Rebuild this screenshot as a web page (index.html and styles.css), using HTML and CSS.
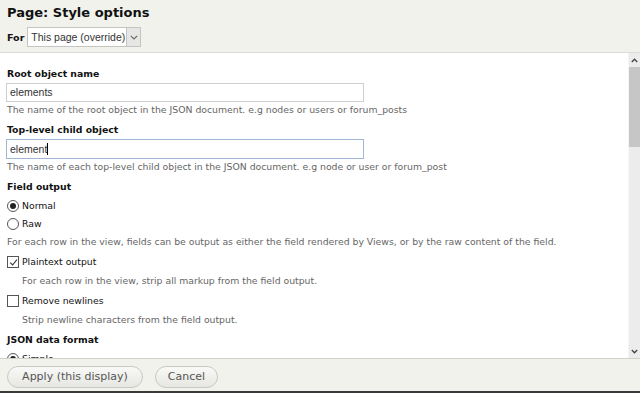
FILE: index.html
```html
<!DOCTYPE html>
<html>
<head>
<meta charset="utf-8">
<link rel="stylesheet" href="styles.css">
</head>
<body>
<div class="dialog">
  <div class="header">
    <h1 class="title">Page: Style options</h1>
    <div class="for-row">
      <span class="for-label">For</span>
      <div class="select">
        <span class="select-text">This page (override)</span>
        <span class="select-btn"><svg width="8" height="5" viewBox="0 0 8 5"><path d="M0.8 0.8 L4 4 L7.2 0.8" fill="none" stroke="#666" stroke-width="1.1"/></svg></span>
      </div>
    </div>
  </div>
  <div class="body">
    <div class="content">
      <div class="item">
        <div class="label">Root object name</div>
        <div class="input">elements</div>
        <div class="desc">The name of the root object in the JSON document. e.g nodes or users or forum_posts</div>
      </div>
      <div class="item">
        <div class="label">Top-level child object</div>
        <div class="input focused">element<span class="caret"></span></div>
        <div class="desc">The name of each top-level child object in the JSON document. e.g node or user or forum_post</div>
      </div>
      <div class="item tight">
        <div class="label">Field output</div>
        <div class="options">
          <div class="option"><span class="radio checked"></span>Normal</div>
          <div class="option"><span class="radio"></span>Raw</div>
        </div>
        <div class="desc after-options">For each row in the view, fields can be output as either the field rendered by Views, or by the raw content of the field.</div>
      </div>
      <div class="item tight">
        <div class="option"><span class="check"><svg width="9" height="9" viewBox="0 0 9 9"><path d="M1.3 4.6 L3.6 7 L7.9 1.6" fill="none" stroke="#333" stroke-width="1.1"/></svg></span>Plaintext output</div>
        <div class="desc indent">For each row in the view, strip all markup from the field output.</div>
      </div>
      <div class="item">
        <div class="option"><span class="check"></span>Remove newlines</div>
        <div class="desc indent">Strip newline characters from the field output.</div>
      </div>
      <div class="item">
        <div class="label">JSON data format</div>
        <div class="options">
          <div class="option"><span class="radio checked"></span>Simple</div>
        </div>
      </div>
    </div>
    <div class="scrollbar">
      <div class="arrow"><svg width="7" height="5" viewBox="0 0 7 5"><path d="M0.8 4 L3.5 1.2 L6.2 4" fill="none" stroke="#444" stroke-width="1.3"/></svg></div>
      <div class="thumb"></div>
      <div class="track"></div>
      <div class="arrow"><svg width="7" height="5" viewBox="0 0 7 5"><path d="M0.8 1 L3.5 3.8 L6.2 1" fill="none" stroke="#444" stroke-width="1.3"/></svg></div>
    </div>
  </div>
  <div class="footer">
    <button class="btn btn-apply">Apply (this display)</button>
    <button class="btn btn-cancel">Cancel</button>
  </div>
</div>
</body>
</html>
```
FILE: styles.css
```css
html, body {
  margin: 0;
  padding: 0;
  background: #f2f2ed;
}
body {
  font-family: "DejaVu Sans", Verdana, sans-serif;
  color: #333;
  width: 640px;
  height: 393px;
  overflow: hidden;
}
.dialog {
  display: flex;
  flex-direction: column;
  height: 393px;
}
.header {
  background: #f2f2ed;
  padding: 4px 7px 0 7px;
  height: 48px;
  border-bottom: 1px solid #dcdcd6;
  box-sizing: content-box;
}
.title {
  margin: 0;
  font-size: 13px;
  font-weight: bold;
  color: #111;
  line-height: 17px;
}
.for-row {
  display: flex;
  align-items: center;
  margin-top: 6px;
  gap: 3px;
}
.for-label {
  font-size: 9.5px;
  font-weight: bold;
  color: #111;
}
.select {
  display: flex;
  height: 20px;
  border: 1px solid #c4c4c0;
  background: #fff;
  box-sizing: border-box;
  width: 114px;
}
.select-text {
  font-family: "Liberation Sans", Arial, sans-serif;
  font-size: 10.5px;
  color: #333;
  line-height: 18px;
  padding-left: 3px;
  flex: 1;
  white-space: nowrap;
}
.select-btn {
  width: 13px;
  border-left: 1px solid #c4c4c0;
  background: #e6e6e4;
  display: flex;
  align-items: center;
  justify-content: center;
}
.body {
  flex: 1;
  display: flex;
  background: #fff;
  min-height: 0;
}
.content {
  flex: 1;
  overflow: hidden;
  padding: 14px 7px 0 7px;
}
.item {
  margin-bottom: 7px;
}
.item.tight {
  margin-bottom: 5px;
}
.label {
  font-size: 9.3px;
  font-weight: bold;
  color: #111;
  line-height: 14px;
  margin-bottom: 2px;
}
.input {
  width: 358px;
  height: 19px;
  box-sizing: border-box;
  border: 1px solid #cfcfcf;
  font-family: "Liberation Sans", Arial, sans-serif;
  font-size: 10.5px;
  line-height: 17px;
  padding-left: 3px;
  color: #333;
  margin-left: -1px;
}
.input.focused {
  border-color: #9fb8d6;
  height: 20px;
  line-height: 18px;
}
.caret {
  display: inline-block;
  width: 1px;
  height: 12px;
  background: #000;
  vertical-align: -2px;
}
.desc {
  font-size: 9.3px;
  color: #666;
  line-height: 13px;
  margin-top: 1px;
}
.desc.after-options {
  margin-top: 2px;
}
.desc.indent {
  padding-left: 15px;
  margin-top: 3px;
}
.options {
  margin-top: 3px;
}
.option {
  display: flex;
  align-items: center;
  font-size: 9.3px;
  color: #111;
  line-height: 18px;
  height: 18px;
}
.radio {
  width: 10px;
  height: 10px;
  border: 1px solid #555;
  border-radius: 50%;
  margin-right: 3px;
  display: flex;
  align-items: center;
  justify-content: center;
  box-sizing: content-box;
}
.radio.checked::after {
  content: "";
  width: 6px;
  height: 6px;
  border-radius: 50%;
  background: #222;
}
.check {
  width: 10px;
  height: 10px;
  border: 1px solid #555;
  margin-right: 3px;
  display: flex;
  align-items: center;
  justify-content: center;
  box-sizing: content-box;
}
.scrollbar {
  width: 11px;
  display: flex;
  flex-direction: column;
  background: #ececec;
  border-left: 1px solid #f6f6f6;
}
.arrow {
  height: 14px;
  display: flex;
  align-items: center;
  justify-content: center;
}
.thumb {
  height: 80px;
  background: #c6c6c6;
}
.track {
  flex: 1;
}
.footer {
  height: 32px;
  border-top: 1px solid #d2d2cc;
  border-bottom: 2px solid #3a3a3a;
  background: #f2f2ed;
  display: flex;
  align-items: center;
  gap: 12px;
  padding: 0 7px;
}
.btn {
  font-family: "DejaVu Sans", Verdana, sans-serif;
  font-size: 11px;
  line-height: 14px;
  color: #555;
  height: 22px;
  padding: 3px 14px;
  border: 1px solid #c8c8c4;
  border-radius: 11px;
  background: linear-gradient(#f9f9f7, #e6e6e2);
  margin-top: 3px;
  box-sizing: border-box;
  white-space: nowrap;
}
.btn-apply {
  width: 136px;
}
.btn-cancel {
  width: 63px;
  padding: 3px 0;
}
```
